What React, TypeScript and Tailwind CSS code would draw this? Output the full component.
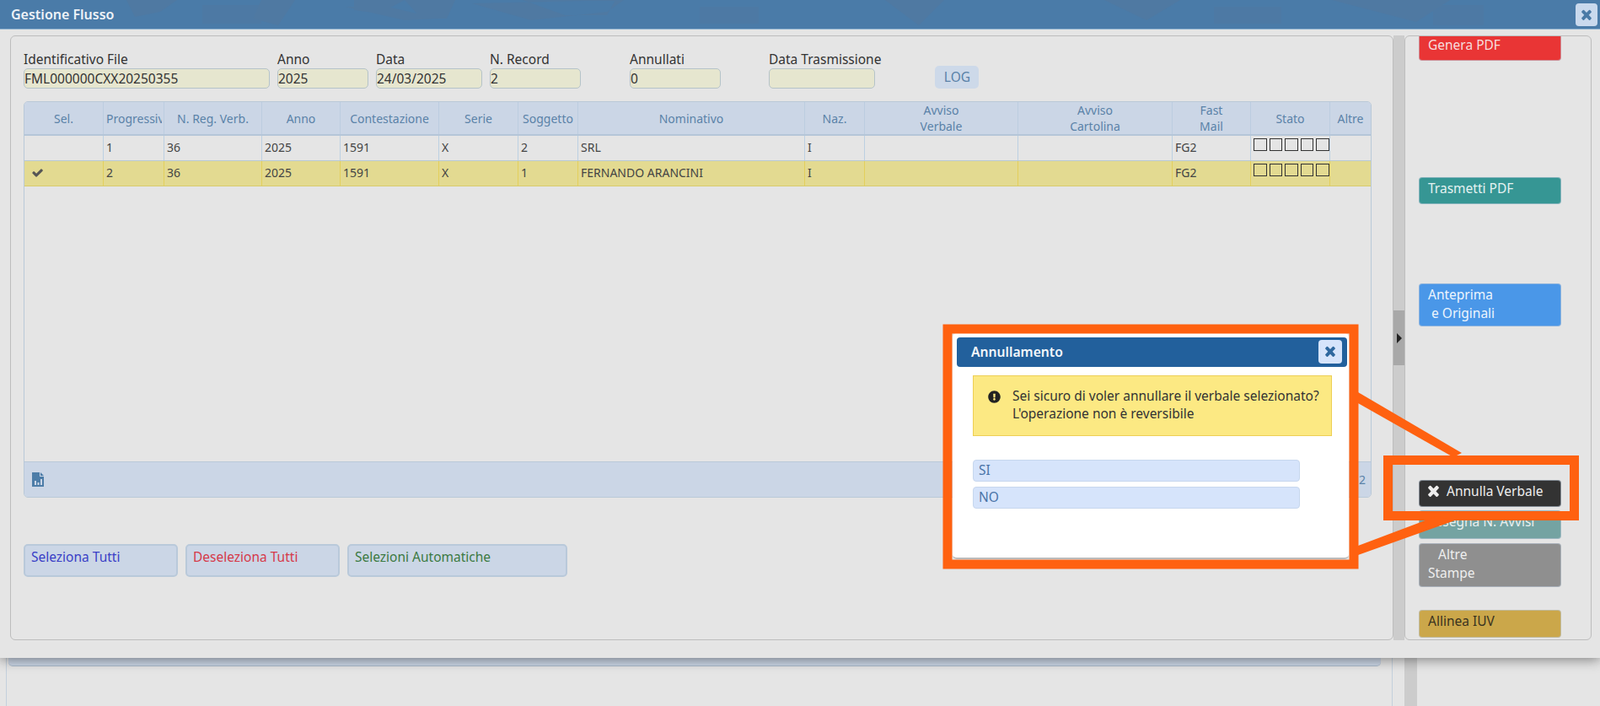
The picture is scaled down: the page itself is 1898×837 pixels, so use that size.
import React from "react";
import { FaExclamationCircle } from "react-icons/fa";

function Times({ size, className }: { size: number; className?: string }) {
  return (
    <svg className={className} width={size} height={size * 1.1} viewBox="100 300 1208 1270" fill="currentColor" preserveAspectRatio="none">
      <path d="M1298 1322q0 40-28 68l-136 136q-28 28-68 28t-68-28l-294-294-294 294q-28 28-68 28t-68-28l-136-136q-28-28-28-68t28-68l294-294-294-294q-28-28-28-68t28-68l136-136q28-28 68-28t68 28l294 294 294-294q28-28 68-28t68 28l136 136q28 28 28 68t-28 68l-294 294 294 294q28 28 28 68z" />
    </svg>
  );
}

function Check({ className }: { className?: string }) {
  return (
    <svg className={className} width="13" height="12" viewBox="90 300 1600 1250" fill="currentColor">
      <path d="M1671 566q0 40-28 68l-724 724-136 136q-28 28-68 28t-68-28l-136-136-362-362q-28-28-28-68t28-68l136-136q28-28 68-28t68 28l294 295 656-657q28-28 68-28t68 28l136 136q28 28 28 68z" />
    </svg>
  );
}

const cols = [
  { w: "w-[94px]", t: "Sel." },
  { w: "w-[72px]", t: "Progressivo" },
  { w: "w-[116px]", t: "N. Reg. Verb." },
  { w: "w-[93px]", t: "Anno" },
  { w: "w-[117px]", t: "Contestazione" },
  { w: "w-[94px]", t: "Serie" },
  { w: "w-[71px]", t: "Soggetto" },
  { w: "w-[269px]", t: "Nominativo" },
  { w: "w-[71px]", t: "Naz." },
  { w: "w-[182px]", t: "Avviso Verbale" },
  { w: "w-[183px]", t: "Avviso Cartolina" },
  { w: "w-[93px]", t: "Fast Mail" },
  { w: "w-[94px]", t: "Stato" },
  { w: "flex-1", t: "Altre" },
];

const fields = [
  { l: "Identificativo File", v: "FML000000CXX20250355", w: "w-[292px]", ml: "ml-0" },
  { l: "Anno", v: "2025", w: "w-[108px]", ml: "ml-[9px]" },
  { l: "Data", v: "24/03/2025", w: "w-[126px]", ml: "ml-[9px]" },
  { l: "N. Record", v: "2", w: "w-[108px]", ml: "ml-[9px]" },
  { l: "Annullati", v: "0", w: "w-[108px]", ml: "ml-[58px]" },
  { l: "Data Trasmissione", v: "", w: "w-[126px]", ml: "ml-[57px]" },
];

function Row({ vals, selected }: { vals: string[]; selected?: boolean }) {
  const line = selected ? "border-[#e3cf5c]" : "border-[#bcd0e2]";
  return (
    <div className={`flex h-[30px] border-b ${selected ? "bg-[#e3da91] border-[#d8cb6c]" : "border-[#b9c9d2]"}`}>
      {cols.map((c, i) => (
        <div key={i} className={`${c.w} shrink-0 ${i < 13 ? `border-r ${line}` : ""} ${c.w === "flex-1" ? "shrink" : ""} pl-[3px] text-[14px] leading-[28px] text-[#444] whitespace-nowrap overflow-hidden`}>
          {i === 0 && selected ? <Check className="ml-[6px] mt-[8px] text-[#555]" /> : null}
          {i === 12 ? (
            <div className="flex gap-[2.6px] pt-[3px]">
              {[0, 1, 2, 3, 4].map((k) => (
                <span key={k} className="block w-[16px] h-[15px] border border-[#333]" />
              ))}
            </div>
          ) : (
            i > 0 && vals[i]
          )}
        </div>
      ))}
    </div>
  );
}

function SideBtn({ bg, className, children }: { bg: string; className: string; children: React.ReactNode }) {
  return (
    <div className={`${bg} ${className} w-[169px] ml-[16px] rounded-[4px] border border-[#b9c6d6]/60 pl-[10px] pt-[1px] text-[15.5px] leading-[22px] shrink-0 whitespace-nowrap`}>
      {children}
    </div>
  );
}

export default function App() {
  return (
    <div className="relative w-[1898px] h-[837px] overflow-hidden bg-[#e5e5e5] font-['Open_Sans',sans-serif]">
      {/* finestra principale */}
      <div className="relative z-10 h-[780px] flex flex-col bg-[#e5e5e5] shadow-[0_2px_14px_rgba(0,0,0,0.45)]">
        <div className="relative h-[35px] shrink-0 flex items-center bg-[#4a7ba8] border-b border-[#8fb2cf] pl-[13px] overflow-hidden">
          <svg className="absolute inset-0" width="1898" height="34" viewBox="0 0 1898 34">
            <g fill="#5a7698" opacity="0.35">
              <path d="M150 0h60l-20 14-30 6zM310 0h40l-20 30-30-8zM420 0h60l-30 16-30-4zM410 8h50l60 14-40 2zM480 0h60l-10 22h-30zM620 0h110l-10 18h-50zM560 4l70 20 90-10 20-14zM1000 0h50l40 30 30-30zM1240 0h70l50 24 40-24zM1580 0l100 26 40-26z" />
              <path d="M240 6h70v22h-70zM830 8h70v20h-70zM1440 8h80v20h-80zM1700 6h60v24h-60z" opacity="0.6" />
            </g>
          </svg>
          <span className="relative text-[16px] font-semibold text-[#eef2f7]">Gestione Flusso</span>
          <div className="absolute right-[3px] top-[4px] w-[26px] h-[27px] rounded-[4px] bg-[#c9d9ed] flex items-center justify-center text-[#4a7aa6]">
            <Times size={12} />
          </div>
        </div>
        <div className="flex-1 flex pl-[12px] pt-[7px] pb-[21px] min-h-0">
          <div className="w-[1641px] border border-[#bdbdbd] rounded-[6px] pl-[15px] pr-[25px] pt-[17px] flex flex-col">
            <div className="flex items-end">
              {fields.map((f) => (
                <div key={f.l} className={f.ml}>
                  <div className="text-[15.5px] leading-[21px] text-[#333] whitespace-nowrap">{f.l}</div>
                  <div className={`${f.w} h-[24px] rounded-[5px] border border-[#b5c3c9] bg-[#e6e6cf] text-[15.5px] leading-[22px] text-[#333]`}>{f.v}</div>
                </div>
              ))}
              <div className="ml-[64px] w-[52px] h-[27px] rounded-[5px] bg-[#cdd9e9] text-[15.5px] leading-[27px] text-center text-[#5a82a8]">LOG</div>
            </div>
            <div className="mt-[15px] h-[470px] flex flex-col w-[1599px] border border-[#b9c9d8] rounded-[5px] overflow-hidden">
              <div className="flex h-[40px] shrink-0 bg-[#cbd6e6] border-b-2 border-[#b5c6d8]">
                {cols.map((c, i) => (
                  <div key={i} className={`${c.w} shrink-0 ${c.w === "flex-1" ? "shrink" : ""} ${i < 13 ? "border-r border-[#bccde0]" : ""} flex items-center justify-center text-center text-[14px] leading-[19px] text-[#5a82a8] overflow-hidden whitespace-pre-line`}>
                    {c.t === "Avviso Verbale" ? "Avviso\nVerbale" : c.t === "Avviso Cartolina" ? "Avviso\nCartolina" : c.t === "Fast Mail" ? "Fast\nMail" : c.t === "Progressivo" ? <span className="block self-center w-[69px] pl-[3px] mr-[2px] text-left whitespace-nowrap overflow-hidden">Progressivo</span> : c.t}
                  </div>
                ))}
              </div>
              <Row vals={["", "1", "36", "2025", "1591", "X", "2", "SRL", "I", "", "", "FG2", "", ""]} />
              <Row selected vals={["", "2", "36", "2025", "1591", "X", "1", "FERNANDO ARANCINI", "I", "", "", "FG2", "", ""]} />
              <div className="flex-1" />
              <div className="h-[42px] shrink-0 bg-[#cbd6e6] border-t border-[#b9c9d8] flex items-center justify-between pl-[9px] pr-[6px]">
                <svg width="15" height="17" viewBox="0 0 15 17" fill="#4d7da8">
                  <path d="M0 0h9v5h5v12H0zM10 0l4 4h-4z" />
                  <path d="M3 10h2v5H3zM6.5 12h2v3h-2zM10 8h2v7h-2z" fill="#cbd6e6" />
                </svg>
                <span className="text-[14px] text-[#5a82a8]">2</span>
              </div>
            </div>
            <div className="mt-[55px] flex gap-[9px]">
              {[
                ["Seleziona Tutti", "w-[183px]", "text-[#3a3fc6]"],
                ["Deseleziona Tutti", "w-[183px]", "text-[#d63a4a]"],
                ["Selezioni Automatiche", "w-[261px]", "text-[#3c7a42]"],
              ].map(([t, w, c]) => (
                <div key={t} className={`${w} ${c} h-[39px] rounded-[5px] border-2 border-[#b9c9da] bg-[#cbd6e6] pl-[7px] pt-[2px] text-[15.5px] leading-[22px]`}>{t}</div>
              ))}
            </div>
          </div>
          <div className="relative w-[13px] shrink-0 bg-[#cccccc]">
            <div className="absolute top-[326px] left-0 right-0 h-[65px] bg-[#a8a8a8] flex items-center justify-center">
              <svg width="6" height="12" viewBox="0 0 6 12" fill="#222"><path d="M0 0l6 6-6 6z" /></svg>
            </div>
          </div>
          <div className="w-[222px] border border-[#bdbdbd] rounded-[6px] overflow-hidden flex flex-col">
            <SideBtn bg="bg-[#e93535]" className="-mt-[3px] h-[32px] text-[#f6dede]">Genera PDF</SideBtn>
            <SideBtn bg="bg-[#369694]" className="mt-[138px] h-[32px] text-[#e4f2f1]">Trasmetti PDF</SideBtn>
            <SideBtn bg="bg-[#4a97e8]" className="mt-[94px] h-[51px] text-[#eef5fd]">Anteprima<br />&nbsp;e Originali</SideBtn>
            <SideBtn bg="bg-[#333333]" className="mt-[182px] h-[32px] text-[#eeeeee]">
              <span className="inline-flex items-center gap-[9px]"><Times size={13} />Annulla Verbale</span>
            </SideBtn>
            <SideBtn bg="bg-[#74a3a2]" className="mt-[4px] h-[34px] text-[#e8f0f0]">Assegna N. Avvisi</SideBtn>
            <SideBtn bg="bg-[#8f8f8f]" className="mt-[5px] h-[52px] text-[#eeeeee]">&nbsp;&nbsp;&nbsp;Altre<br />Stampe</SideBtn>
            <SideBtn bg="bg-[#cba74a]" className="mt-[27px] h-[33px] text-[#3a3320]">Allinea IUV</SideBtn>
          </div>
        </div>
      </div>

      {/* finestra sottostante */}
      <div className="flex h-[57px]">
        <div className="ml-[7px] w-[1645px] border-l border-r border-[#c3d0dc]">
          <div className="ml-[2px] w-[1628px] h-[10px] bg-[#cbd6e6] border-b border-[#a9b9c9] rounded-b-[5px]" />
        </div>
        <div className="ml-[14px] w-[15px] bg-[#cccccc]" />
      </div>

      {/* finestra di conferma */}
      <div className="absolute z-20 left-[1130px] top-[395px] w-[470px] h-[268px] bg-white rounded-[5px] border-b-2 border-[#bbbbbb] pl-[5px] pr-[2px] pt-[5px]">
        <div className="relative h-[35px] rounded-[4px] bg-[#22609c] flex items-center pl-[17px] pt-[1px] text-[15.7px] font-semibold text-[#f2f6fa]">
          Annullamento
          <div className="absolute right-[6px] top-[3px] w-[28px] h-[28px] rounded-[4px] bg-[#d6e4fb] flex items-center justify-center text-[#2f689f]">
            <Times size={12} />
          </div>
        </div>
        <div className="ml-[19px] mt-[10px] w-[426px] h-[72px] bg-[#fce983] border border-[#edcf55] flex items-center pl-[17px] text-[15.5px] leading-[21px] text-[#333]">
          <FaExclamationCircle className="text-[15px] text-[#222] mr-[14px] shrink-0 -mt-[21px]" />
          <div className="whitespace-nowrap -mt-[2px]">Sei sicuro di voler annullare il verbale selezionato?<br />L'operazione non è reversibile</div>
        </div>
        <div className="ml-[19px] mt-[28px] w-[388px] h-[26px] rounded-[4px] border border-[#c7d7ee] bg-[#d6e4fb] pl-[6px] text-[15.5px] leading-[22px] text-[#4a74a8]">SI</div>
        <div className="ml-[19px] mt-[6px] w-[388px] h-[26px] rounded-[4px] border border-[#c7d7ee] bg-[#d6e4fb] pl-[6px] text-[15.5px] leading-[22px] text-[#4a74a8]">NO</div>
      </div>

      {/* evidenziazione */}
      <svg className="absolute z-30 left-0 top-0 pointer-events-none" width="1898" height="837" viewBox="0 0 1898 837" fill="none">
        <rect x="1124" y="390" width="482" height="279" stroke="#ff6110" strokeWidth="11" />
        <rect x="1646.5" y="545.5" width="221" height="66" stroke="#ff6110" strokeWidth="11" />
        <path d="M1611 465L1734 537 1724 542 1611 478z" fill="#ff6110" />
        <path d="M1611 647L1704 612 1726 617 1611 658z" fill="#ff6110" />
      </svg>
    </div>
  );
}
